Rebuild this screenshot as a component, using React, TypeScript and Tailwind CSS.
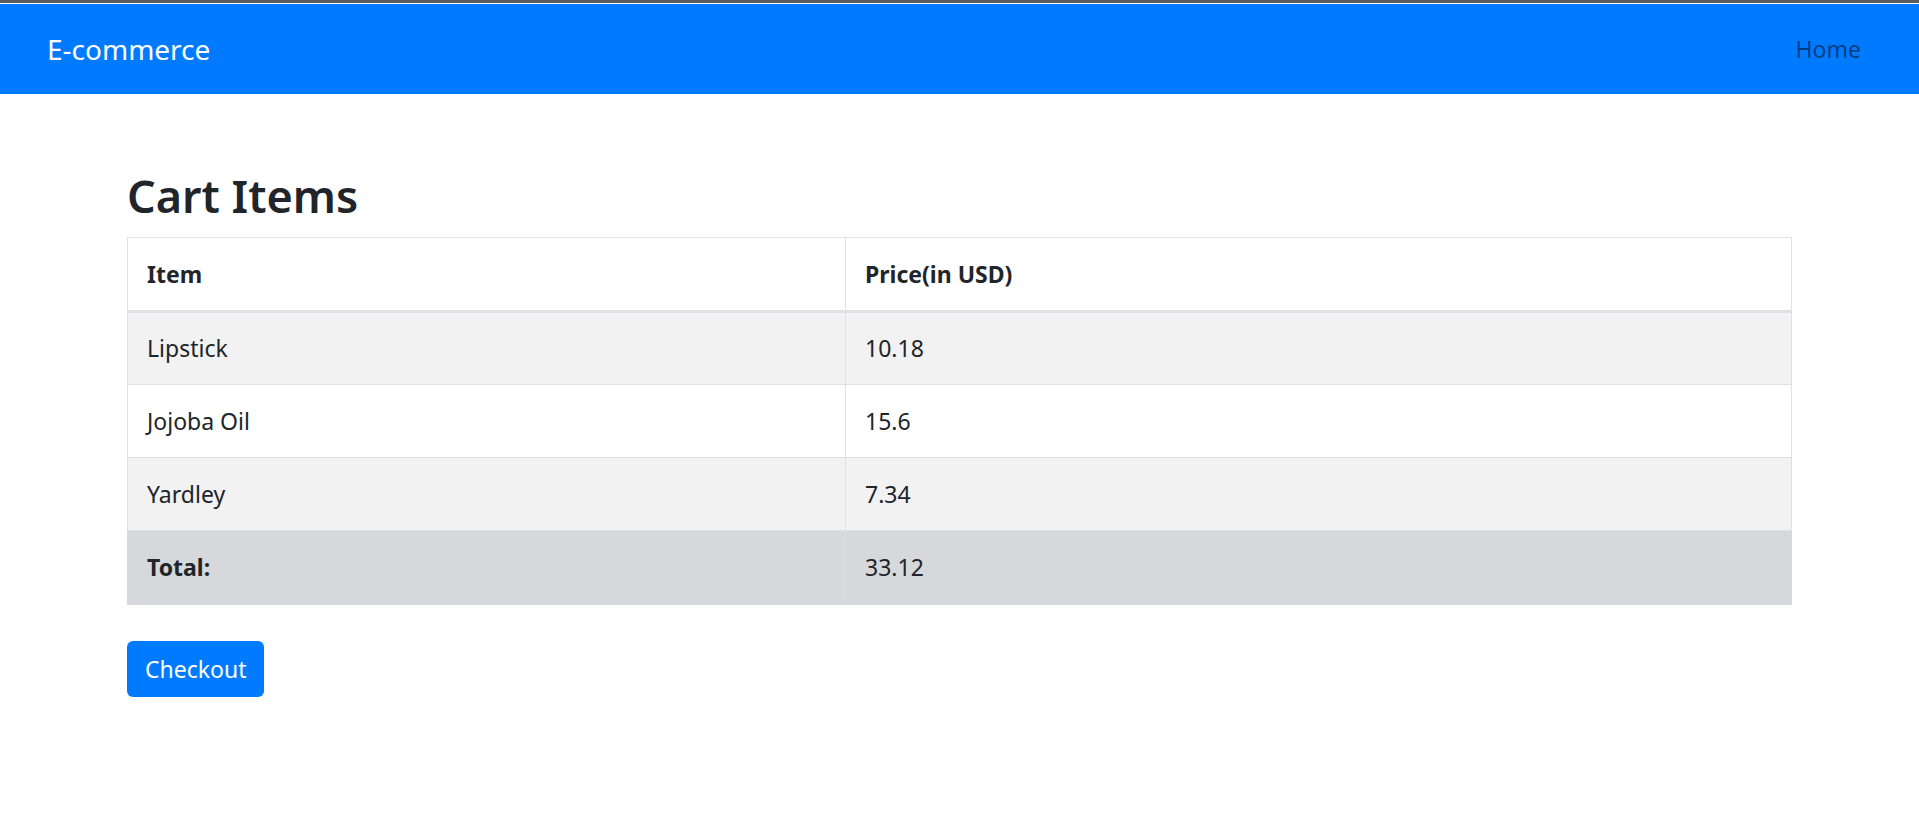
import React from 'react';

const items = [
  { name: 'Lipstick', price: '10.18' },
  { name: 'Jojoba Oil', price: '15.6' },
  { name: 'Yardley', price: '7.34' },
];

const font = { fontFamily: '"Noto Sans", "Open Sans", sans-serif' };

export default function App() {
  return (
    <div className="min-h-[827px] bg-white text-[#212529]" style={font}>
      <div className="h-[3px] bg-[#5b5b5b]" />
      <div className="h-px bg-white" />
      <nav className="h-[90px] bg-[#007bff] flex items-center justify-between pl-[47px] pr-[58px]">
        <span className="text-white text-[28px] leading-none">E-commerce</span>
        <span className="text-black/50 text-[23px] leading-none">Home</span>
      </nav>

      <div className="w-[1665px] mx-auto pt-[73px]">
        <h2 className="text-[45px] font-semibold leading-[58px] mb-[12px]">Cart Items</h2>

        <table className="w-full border-collapse border border-[#dee2e6] text-[23px]">
          <thead>
            <tr className="h-[74px]">
              <th className="w-[718px] text-left font-bold px-[19px] border border-[#dee2e6] border-b-[3px]">Item</th>
              <th className="text-left font-bold px-[19px] border border-[#dee2e6] border-b-[3px]">Price(in USD)</th>
            </tr>
          </thead>
          <tbody>
            {items.map((it, i) => (
              <tr key={it.name} className={`h-[73px] ${i % 2 === 0 ? 'bg-[#f2f2f2]' : 'bg-white'}`}>
                <td className="px-[19px] border border-[#dee2e6]">{it.name}</td>
                <td className="px-[19px] border border-[#dee2e6]">{it.price}</td>
              </tr>
            ))}
            <tr className="h-[74px] bg-[#d6d8db]">
              <td className="px-[19px] font-bold border border-[#d6d8db] border-r-[#dcdde0]">Total:</td>
              <td className="px-[19px] border border-[#d6d8db]">33.12</td>
            </tr>
          </tbody>
        </table>

        <button className="mt-[36px] h-[56px] px-[18px] rounded-[6px] bg-[#007bff] text-white text-[23px] leading-none">
          Checkout
        </button>
      </div>
    </div>
  );
}
